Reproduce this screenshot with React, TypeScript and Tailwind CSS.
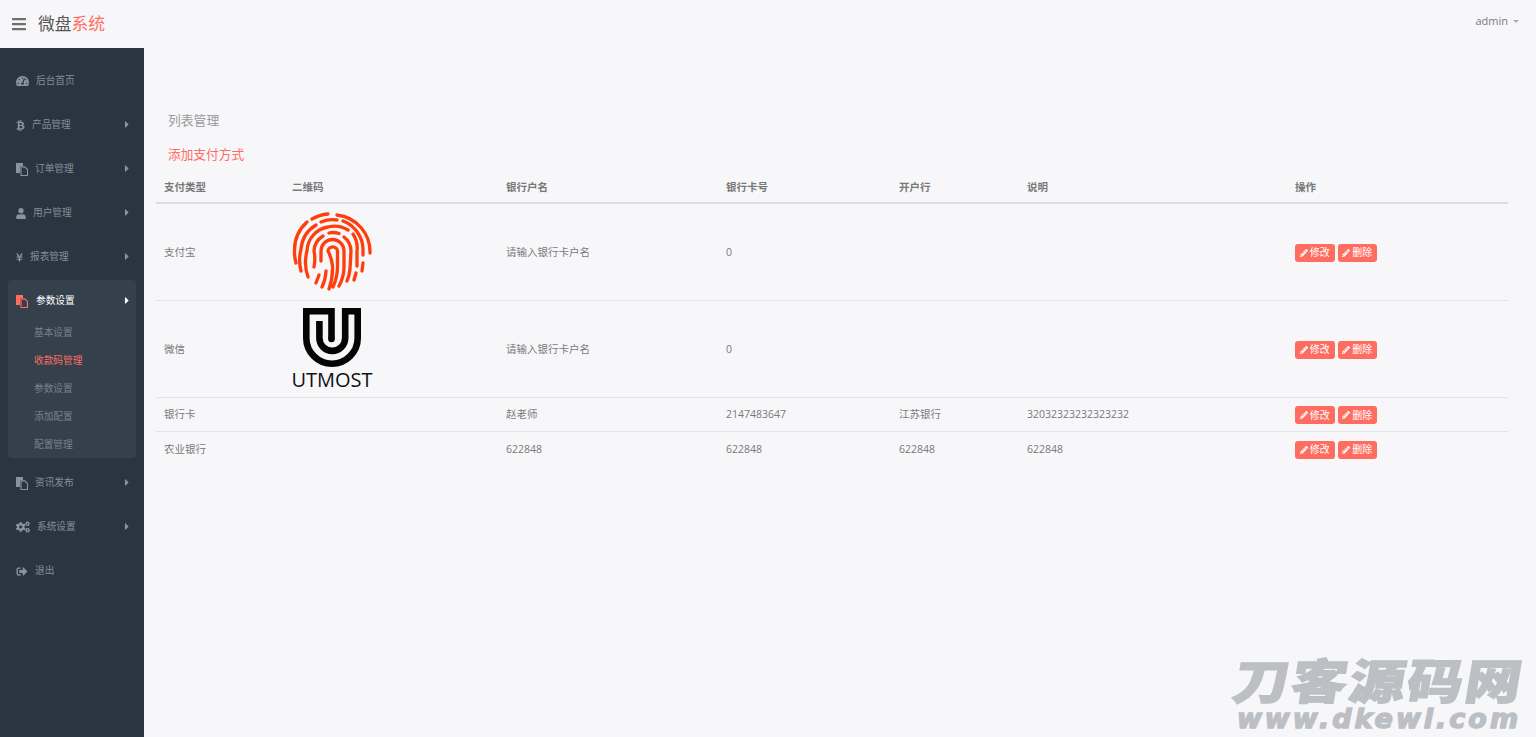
import { FaBars, FaBtc, FaCaretRight, FaCogs, FaPencilAlt, FaSignOutAlt, FaTachometerAlt, FaUser, FaYenSign } from 'react-icons/fa';
import type { ReactNode } from 'react';

const font = { fontFamily: '"Open Sans", "Noto Sans CJK SC", sans-serif' };

// fa-files-o: solid page behind an outlined page
function FilesIcon({ className }: { className: string }) {
  return (
    <svg viewBox="0 0 12 13" className={className} fill="currentColor">
      <path d="M0 0H7V3.2H4.2V10H0Z" />
      <path d="M5 3.9H8.8L11.5 6.6V12.5H5Z" fill="none" stroke="currentColor" strokeWidth="1.1" />
    </svg>
  );
}

function NavItem({ icon, label, arrow = true }: { icon: ReactNode; label: string; arrow?: boolean }) {
  return (
    <div className="h-[44px] pt-[2px] pl-4 pr-[14px] flex items-center text-[#858d96] text-[9.7px]">
      <span className="flex items-center text-[#8a929b] mr-[7px]">{icon}</span>
      <span>{label}</span>
      {arrow && <FaCaretRight className="ml-auto mb-[2px] w-[6px] h-[11px] text-[#8a929b]" />}
    </div>
  );
}

function Fingerprint() {
  return (
    <svg viewBox="0 0 80 80" className="w-[80px] h-[80px]" fill="none" stroke="#ff3d0d" strokeWidth="3.3" strokeLinecap="round">
      <path d="M45 3 A37 37 0 0 1 78 41 M20 7 A37 37 0 0 1 36 2" />
      <path d="M15 10 A38 38 0 0 0 2.5 39 A40 40 0 0 0 4 51" />
      <path d="M9 59 A44 44 0 0 1 9 37 A31 31 0 0 1 24 13 M29 10 A31 31 0 0 1 45 8 M51 9 A31 31 0 0 1 71 37 L71 43" />
      <path d="M71 51 L70 59" />
      <path d="M16 65 A44 44 0 0 1 15 39 A25 25 0 0 1 36 15 A25 25 0 0 1 56 18 M61 22 A25 25 0 0 1 65 39 L65 54 M64 61 L62 68" />
      <path d="M24 71 L27 63 M22 55 A40 40 0 0 0 22 39 A18.5 18.5 0 0 1 31 24 M37 21 A18.5 18.5 0 0 1 47 21.5 M52 25 A18.5 18.5 0 0 1 59 39 L58 57 A40 40 0 0 1 55 69" />
      <path d="M30 75 A40 40 0 0 0 34 59 M29 49 L29 39 A11.5 11.5 0 0 1 52 39 L52 54 A40 40 0 0 1 47 74" />
      <path d="M37 77 A60 60 0 0 0 40.5 54 A40 40 0 0 0 36 39 A4.8 4.8 0 0 1 45.5 39 L45.5 54 A50 50 0 0 1 41 75" />
    </svg>
  );
}

function UtmostLogo() {
  return (
    <div className="w-[80px] h-[96px] flex flex-col items-center pt-[7px]">
      <svg viewBox="0 0 58 59" className="w-[58px] h-[59px]" fill="none" stroke="#050505" strokeWidth="6.6">
        <path d="M28.5 31 V3.3 H3.3 V30 A25.7 25.7 0 0 0 54.7 30 V3.3 H42.2 V30 A12.9 12.9 0 0 1 16.4 30 V13" />
        <circle cx="28.5" cy="31" r="3.3" fill="#050505" stroke="none" />
      </svg>
      <span className="text-[20px] leading-[20px] text-[#111] mt-[3px]" style={{ fontFamily: '"Open Sans", sans-serif' }}>UTMOST</span>
    </div>
  );
}

function ActionButton({ label }: { label: string }) {
  return (
    <button className="h-[18px] w-[39.5px] justify-center rounded-[3px] bg-[#ff6c60] text-white text-[10px] flex items-center gap-[2px]">
      <FaPencilAlt className="w-[8px] h-[8px]" />
      {label}
    </button>
  );
}

const rows = [
  { type: '支付宝', qr: <Fingerprint />, name: '请输入银行卡户名', card: '0', bank: '', note: '', h: 'h-[97px]' },
  { type: '微信', qr: <UtmostLogo />, name: '请输入银行卡户名', card: '0', bank: '', note: '', h: 'h-[97px]' },
  { type: '银行卡', qr: null, name: '赵老师', card: '2147483647', bank: '江苏银行', note: '32032323232323232', h: 'h-[34px]' },
  { type: '农业银行', qr: null, name: '622848', card: '622848', bank: '622848', note: '622848', h: 'h-[35px]' },
];

export default function App() {
  return (
    <div className="relative w-full h-[737px] overflow-hidden bg-[#f7f7fa] text-[#797979]" style={font}>
      <header className="h-[48px] flex items-center pl-3 pr-[17px]">
        <FaBars className="w-[14px] h-[16px] text-[#6f6f6f]" />
        <div className="ml-3 text-[16.8px] text-[#555]">
          微盘<span className="text-[#ff6c60]">系统</span>
        </div>
        <div className="ml-auto mb-[6px] flex items-center gap-[5px] text-[11px] text-[#797979]">
          admin
          <span className="border-x-[3.5px] border-t-[3.5px] border-x-transparent border-t-[#a9adb5] mt-px" />
        </div>
      </header>

      <div className="flex h-[689px]">
        <aside className="w-[144px] shrink-0 bg-[#2a3542] pt-[10px]">
          <NavItem icon={<FaTachometerAlt className="w-[13px] h-[12px]" />} label="后台首页" arrow={false} />
          <NavItem icon={<FaBtc className="w-[9px] h-[11px]" />} label="产品管理" />
          <NavItem icon={<FilesIcon className="w-3 h-[13px]" />} label="订单管理" />
          <NavItem icon={<FaUser className="w-[10px] h-[11px]" />} label="用户管理" />
          <NavItem icon={<FaYenSign className="w-[7px] h-[11px]" />} label="报表管理" />

          <div className="mx-2 mt-0.5 mb-0.5 rounded-[4px] bg-[#35404d] h-[178px]">
            <div className="h-[38px] pt-1 pl-2 pr-[6px] flex items-center text-[9.7px] text-white">
              <FilesIcon className="w-3 h-[13px] text-[#ff6c60] mr-[8px]" />
              <span>参数设置</span>
              <FaCaretRight className="ml-auto mb-[2px] w-[6px] h-[11px]" />
            </div>
            <div className="pl-[26px] text-[9.7px] text-[#768089]">
              <div className="h-[28px] pt-[2px] flex items-center">基本设置</div>
              <div className="h-[28px] pt-[2px] flex items-center text-[#ff6c60]">收款码管理</div>
              <div className="h-[28px] pt-[2px] flex items-center">参数设置</div>
              <div className="h-[28px] pt-[2px] flex items-center">添加配置</div>
              <div className="h-[28px] pt-[2px] flex items-center">配置管理</div>
            </div>
          </div>

          <NavItem icon={<FilesIcon className="w-3 h-[13px]" />} label="资讯发布" />
          <NavItem icon={<FaCogs className="w-[14px] h-[12px]" />} label="系统设置" />
          <NavItem icon={<FaSignOutAlt className="w-3 h-[11px]" />} label="退出" arrow={false} />
        </aside>

        <main className="flex-1 pl-3 pr-7 pt-[62px]">
          <div className="pl-3 text-[12.8px] leading-[20px] text-[#9a9a9a]">列表管理</div>
          <div className="pl-3 mt-[14px] text-[12.7px] leading-[20px] text-[#ff6c60]">添加支付方式</div>
          <table className="w-full mt-[8px] table-fixed border-collapse text-[10.5px]">
            <thead>
              <tr className="h-[31px] border-b-2 border-[#dcdde0] text-left">
                <th className="w-[128px] pl-2 pt-[2px] font-semibold">支付类型</th>
                <th className="w-[214px] pl-2 pt-[2px] font-semibold">二维码</th>
                <th className="w-[220px] pl-2 pt-[2px] font-semibold">银行户名</th>
                <th className="w-[173px] pl-2 pt-[2px] font-semibold">银行卡号</th>
                <th className="w-[128px] pl-2 pt-[2px] font-semibold">开户行</th>
                <th className="w-[268px] pl-2 pt-[2px] font-semibold">说明</th>
                <th className="pl-2 pt-[2px] font-semibold">操作</th>
              </tr>
            </thead>
            <tbody>
              {rows.map((row) => (
                <tr key={row.type} className={`${row.h} border-b border-[#e2e3e6] last:border-b-0`}>
                  <td className="pl-2 pt-[2px]">{row.type}</td>
                  <td className="pl-2 py-0">{row.qr}</td>
                  <td className="pl-2 pt-[2px]">{row.name}</td>
                  <td className="pl-2 pt-[2px]">{row.card}</td>
                  <td className="pl-2 pt-[2px]">{row.bank}</td>
                  <td className="pl-2 pt-[2px]">{row.note}</td>
                  <td className="pl-2 pt-[2px]">
                    <div className="flex gap-[3px]">
                      <ActionButton label="修改" />
                      <ActionButton label="删除" />
                    </div>
                  </td>
                </tr>
              ))}
            </tbody>
          </table>
        </main>
      </div>

      <div className="absolute right-[12px] top-[648px] w-[290px] flex flex-col items-center text-[#bcbfc3] font-black">
        <div className="text-[56px] leading-[62px] tracking-[2px] whitespace-nowrap -skew-x-[8deg] scale-y-85 [-webkit-text-stroke:1.5px_#bcbfc3]" style={{ fontFamily: '"Noto Sans CJK SC", sans-serif' }}>刀客源码网</div>
        <div className="-mt-[2px] text-[27px] leading-[22px] tracking-[3px] whitespace-nowrap italic [-webkit-text-stroke:1.5px_#bcbfc3]" style={{ fontFamily: '"DejaVu Sans", sans-serif' }}>www.dkewl.com</div>
      </div>
    </div>
  );
}
